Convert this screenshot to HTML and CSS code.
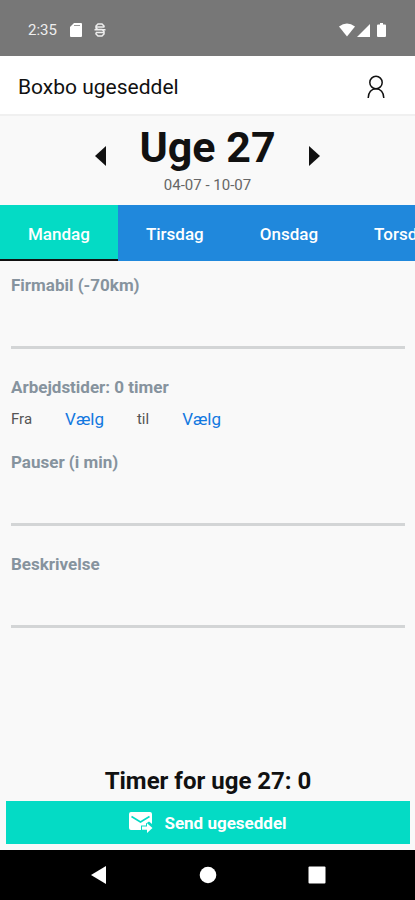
FILE: index.html
```html
<!DOCTYPE html>
<html lang="da">
<head>
<meta charset="UTF-8">
<meta name="viewport" content="width=device-width, initial-scale=1.0">
<title>Boxbo ugeseddel</title>
<link rel="stylesheet" href="styles.css">
</head>
<body>

<!-- Status bar -->
<div class="status-bar">
  <span class="clock">2:35</span>
  <svg class="sd-icon" width="12" height="14" viewBox="0 0 12 14"><path fill="#fff" d="M4 0h7a1 1 0 0 1 1 1v12a1 1 0 0 1-1 1H1a1 1 0 0 1-1-1V4z"/><path stroke="#999" d="M4 2.500h6"/></svg>
  <svg width="12" height="14" viewBox="0 0 12 14" fill="none" stroke="#eee" stroke-width="1.500"><path d="M10 4.500V3L8 1H4L2 3v2l2 1.500h4L10 8.500v2.500l-2 2H4l-2-2V9.500M0.500 6.700h11M2 4h8M2 9.500h8"/></svg>
  <div class="status-right">
    <svg width="16" height="14" viewBox="0 0 16 14"><path fill="#fff" d="M0 3.500Q8-2.500 16 3.500L8 13.500z"/></svg>
    <svg width="13" height="13" viewBox="0 0 13 13"><path fill="#fff" d="M13 0v13H0z"/></svg>
    <svg class="battery-icon" width="9" height="14" viewBox="0 0 9 14"><path fill="#fff" d="M3 0h3v1.500h2a1 1 0 0 1 1 1V13a1 1 0 0 1-1 1H1a1 1 0 0 1-1-1V2.500a1 1 0 0 1 1-1h2z"/></svg>
  </div>
</div>

<!-- App header -->
<header class="app-header">
  <h1>Boxbo ugeseddel</h1>
  <button class="icon-button" type="button" aria-label="Profil">
    <svg width="18" height="24" viewBox="0 0 18 24" fill="none" stroke="#111" stroke-width="1.500"><circle cx="9" cy="7.500" r="6.200"/><path d="M1.200 23c0-5.500 3.300-9.200 7.800-9.200s7.800 3.700 7.800 9.200"/></svg>
  </button>
</header>

<main class="content">
  <!-- Week picker -->
  <section class="week">
    <button class="icon-button" type="button" aria-label="Forrige uge">
      <svg width="11" height="20" viewBox="0 0 11 20"><path fill="#111" d="M11 0v20L0 10z"/></svg>
    </button>
    <div class="week-text">
      <h2>Uge 27</h2>
      <p>04-07 - 10-07</p>
    </div>
    <button class="icon-button" type="button" aria-label="Næste uge">
      <svg width="11" height="20" viewBox="0 0 11 20"><path fill="#111" d="M0 0v20l11-10z"/></svg>
    </button>
  </section>

  <!-- Day tabs -->
  <nav class="tabs">
    <button class="tab active" type="button">Mandag</button>
    <button class="tab" type="button">Tirsdag</button>
    <button class="tab" type="button">Onsdag</button>
    <button class="tab" type="button">Torsdag</button>
  </nav>

  <form class="day-form" id="day-form">
    <label class="label" for="car">Firmabil (-70km)</label>
    <input class="field" id="car" type="text">

    <div class="label">Arbejdstider: 0 timer</div>
    <div class="times">
      <span class="from">Fra</span>
      <button class="pick" type="button">Vælg</button>
      <span class="to">til</span>
      <button class="pick" type="button">Vælg</button>
    </div>

    <label class="label" for="breaks">Pauser (i min)</label>
    <input class="field" id="breaks" type="text">

    <label class="label" for="description">Beskrivelse</label>
    <input class="field" id="description" type="text">
  </form>

  <div class="summary">
    <p>Timer for uge 27: 0</p>
    <button class="send" type="submit" form="day-form">
      <svg width="24" height="21" viewBox="0 0 24 21"><path fill="#fff" d="M2 0h19a2 2 0 0 1 2 2v10l-3-2.500-3 2v2h-5V18H2a2 2 0 0 1-2-2V2a2 2 0 0 1 2-2z"/><path fill="none" stroke="#04dbc5" stroke-width="1.600" d="M2.500 4.500l9 5.500 9-5.500"/><path fill="#fff" d="M13 14.500h5v-3.300l5.500 4.900-5.500 4.900v-3.300h-5z"/></svg>
      Send ugeseddel
    </button>
  </div>
</main>

<!-- System navigation -->
<nav class="system-nav">
  <button class="icon-button" type="button" aria-label="Tilbage">
    <svg width="18" height="18" viewBox="0 0 18 18"><path fill="#fff" d="M16 0v18L1 9z"/></svg>
  </button>
  <button class="icon-button" type="button" aria-label="Hjem">
    <svg width="18" height="18" viewBox="0 0 18 18"><circle fill="#fff" cx="9" cy="9" r="8.300"/></svg>
  </button>
  <button class="icon-button" type="button" aria-label="Oversigt">
    <svg width="18" height="18" viewBox="0 0 18 18"><rect fill="#fff" x="0.500" y="0.500" width="17" height="17" rx="1"/></svg>
  </button>
</nav>

</body>
</html>
```
FILE: styles.css
```css
/* Reset */
* {
  margin: 0;
  padding: 0;
  box-sizing: border-box;
}
body {
  display: flex;
  flex-direction: column;
  min-height: 100vh;
  font-family: Roboto, sans-serif;
  background: #f9f9f9;
  color: #111;
}
button {
  border: none;
  background: none;
  font-family: inherit;
  cursor: pointer;
}
svg {
  display: block;
}

/* Status bar */
.status-bar {
  display: flex;
  align-items: center;
  height: 56px;
  padding: 4px 29px 0 28px;
  background: #777;
  color: #eee;
}
.clock {
  font-size: 15px;
}
.sd-icon {
  margin: 0 12px 0 13px;
}
.status-right {
  display: flex;
  align-items: center;
  gap: 2px;
  margin-left: auto;
}
.battery-icon {
  margin-left: 5px;
}

/* App header */
.app-header {
  display: flex;
  align-items: center;
  justify-content: space-between;
  height: 60px;
  padding: 3px 30px 0 18px;
  background: #fff;
  border-bottom: 2px solid #f0f0f0;
}
.app-header h1 {
  font-size: 21px;
  font-weight: 400;
}

.content {
  display: flex;
  flex-direction: column;
  flex: 1;
}

/* Week picker */
.week {
  display: flex;
  align-items: center;
  justify-content: center;
  gap: 33px;
  height: 90px;
  padding-bottom: 10px;
  margin-bottom: -1px;
}
.week-text {
  padding-top: 5px;
  text-align: center;
}
.week h2 {
  font-size: 43px;
  line-height: 48px;
}
.week p {
  margin-top: 4px;
  font-size: 15px;
  line-height: 20px;
  color: #666;
}

/* Day tabs */
.tabs {
  display: flex;
  height: 56px;
  overflow: hidden;
  background: #2088dc;
}
.tab {
  flex: none;
  padding: 4px 28px 0;
  border-bottom: 2px solid transparent;
  font-size: 17px;
  font-weight: 500;
  color: #fff;
}
.tab.active {
  background: #04dbc5;
  border-color: #111;
}

/* Form */
.day-form {
  display: flex;
  flex-direction: column;
  padding: 14px 10px 0 11px;
}
.label {
  font-size: 17px;
  font-weight: 700;
  line-height: 20px;
  color: #86939e;
}
.field {
  width: 100%;
  height: 54px;
  margin-bottom: 28px;
  border: none;
  border-bottom: 3px solid #d3d5d6;
  background: none;
  font-family: inherit;
  font-size: 17px;
  outline: none;
}
.times {
  display: flex;
  align-items: center;
  height: 44px;
  margin-bottom: 11px;
  font-size: 15px;
  color: #555;
}
.pick {
  padding: 0 33px;
  font-size: 17px;
  color: #1278e0;
}

/* Summary */
.summary {
  margin-top: auto;
  padding: 0 5px 6px 6px;
  text-align: center;
}
.summary p {
  margin-bottom: 6px;
  font-size: 24px;
  font-weight: 700;
  line-height: 28px;
}
.send {
  display: flex;
  align-items: center;
  justify-content: center;
  gap: 11px;
  width: 100%;
  height: 43px;
  background: #04dbc5;
  font-size: 17px;
  font-weight: 700;
  color: #fff;
}

/* System navigation */
.system-nav {
  display: flex;
  align-items: center;
  justify-content: center;
  gap: 91px;
  height: 50px;
  background: #000;
}
```
